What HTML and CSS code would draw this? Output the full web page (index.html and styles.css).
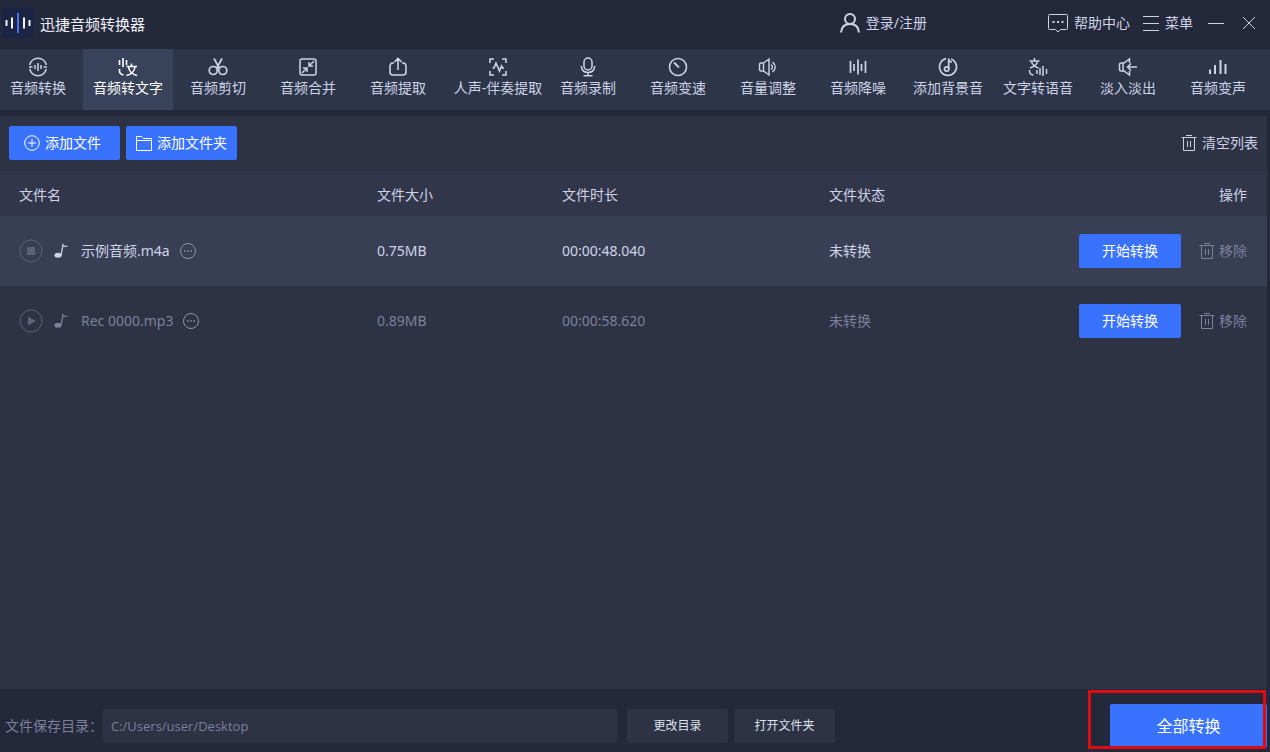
FILE: index.html
```html
<!DOCTYPE html>
<html lang="zh-CN">
<head>
<meta charset="utf-8">
<title>迅捷音频转换器</title>
<link rel="stylesheet" href="styles.css">
</head>
<body>
<svg class="sprite" aria-hidden="true">
  <symbol id="trash" viewBox="0 0 16 18"><path d="M0.500 3.500H15.500M5 1.500h6M2.500 3.500v13h11v-13M6.500 7v6M9.500 7v6"/></symbol>
  <symbol id="more" viewBox="0 0 18 18"><circle cx="9" cy="9" r="7.500"/><path d="M5 9h1.500M8.250 9h1.500M11.500 9H13" stroke-width="1.300"/></symbol>
  <symbol id="note" viewBox="0 0 14 16"><ellipse cx="4" cy="12.300" rx="3.600" ry="2.500" fill="currentColor" stroke="none"/><path d="M7 12.500L9 2Q10 4 13.500 3" stroke-width="1.300"/></symbol>
</svg>
<div class="app">
  <header class="titlebar">
    <svg class="logo" viewBox="0 0 32 32"><rect width="32" height="32" rx="5" fill="#1c2444" stroke="none"/><path d="M4.500 13v6M10 10.500v11M22 10.500v11M27.500 13v6" stroke="#f2f4ff" stroke-width="2"/><path d="M16 6v20" stroke="#4a70f0" stroke-width="2"/></svg>
    <h1 class="app-name">迅捷音频转换器</h1>
    <button class="plain login"><svg class="icon" viewBox="0 0 20 20"><g stroke-width="2"><circle cx="10" cy="6" r="5"/><path d="M1 19.500C1.500 13.500 5 11 10 11s8.500 2.500 9 8.500"/></g></svg>登录/注册</button>
    <button class="plain help"><svg class="icon" viewBox="0 0 20 20"><path d="M1.500 1.500h17q1 0 1 1v13q0 1-1 1h-6L10 19l-2.500-2.500h-6q-1 0-1-1v-13q0-1 1-1z"/><path d="M4.500 9h2M9 9h2M13.500 9h2" stroke-width="2"/></svg>帮助中心</button>
    <button class="plain menu"><svg class="icon-16" viewBox="0 0 16 16"><path d="M0 1.500h16M0 8.500h16M0 15.500h16"/></svg>菜单</button>
    <button class="plain window-btn" aria-label="最小化"><svg class="icon-16" viewBox="0 0 16 16"><path d="M0 8.500h16"/></svg></button>
    <button class="plain window-btn close" aria-label="关闭"><svg class="icon-14" viewBox="0 0 14 14"><path d="M1 1l12 12M13 1L1 13"/></svg></button>
  </header>

  <nav class="tabs">
    <button class="tab"><svg class="icon" viewBox="0 0 20 20"><g stroke-width="1.500"><path d="M1.700 8A8.500 8.500 0 0 1 18.300 8M18.300 12A8.500 8.500 0 0 1 1.700 12M1 10h3.500M15.500 10H19M7 8v4M10 6v8M13 8v4"/></g></svg>音频转换</button>
    <button class="tab active"><svg class="icon" viewBox="0 0 20 20"><g stroke-width="1.600"><path d="M1.500 3v5M5 1v9M8.500 3v5M1.500 12v2q0 3 4 4M13.500 6.500v3M8.500 9.500H19M10.500 10c.5 4 4 7.500 8.500 8.500M17 10c-.5 4-4 7.500-8.500 8.500"/></g></svg>音频转文字</button>
    <button class="tab"><svg class="icon" viewBox="0 0 20 20"><g stroke-width="1.700"><circle cx="5.200" cy="13.500" r="4"/><circle cx="14.800" cy="13.500" r="4"/><path d="M6 1.500l5.500 10M14 1.500L8.500 11.500"/></g></svg>音频剪切</button>
    <button class="tab"><svg class="icon" viewBox="0 0 20 20"><g stroke-width="1.500"><rect x="2" y="2" width="16" height="16" rx="2"/><path d="M16 4l-5 5M11 5v4h4M4 16l5-5M5 11h4v4"/></g></svg>音频合并</button>
    <button class="tab"><svg class="icon" viewBox="0 0 20 20"><g stroke-width="1.600"><path d="M6 6H4Q2 7 2 9v6q0 3 3 3h10q3 0 3-3V9q0-2-2-3h-2M10 13V2M6.500 5L10 1.500 13.500 5"/></g></svg>音频提取</button>
    <button class="tab wide"><svg class="icon" viewBox="0 0 20 20"><g stroke-width="1.600"><path d="M6 2H2v4M14 2h4v4M6 18H2v-4M14 18h4v-4M4.500 11H6l2-5 3.500 8 2-5 1 2h1.500"/></g></svg>人声-伴奏提取</button>
    <button class="tab"><svg class="icon" viewBox="0 0 20 20"><g stroke-width="1.500"><rect x="6" y="1" width="8" height="12" rx="4"/><path d="M3.500 9v1.500q1 5 6.500 5t6.500-5V9M10 15.500v3M5.500 18.700h9"/></g></svg>音频录制</button>
    <button class="tab"><svg class="icon" viewBox="0 0 20 20"><circle cx="10" cy="10" r="8.500" stroke-width="1.600"/><path d="M6 5.500l5 5" stroke-width="1.800"/></svg>音频变速</button>
    <button class="tab"><svg class="icon" viewBox="0 0 20 20"><g stroke-width="1.400"><path d="M5.500 6L11 2v16l-5.500-4H3Q1.500 14 1.500 12.500v-5Q1.500 6 3 6zM5.500 6v8M13 7.500q3 2.500 0 5M14.500 5q5.500 5 0 10"/></g></svg>音量调整</button>
    <button class="tab"><svg class="icon" viewBox="0 0 20 20"><path d="M2.500 4v12M6 7v7M10 2.500v15M13.500 7v7M17.500 4v12" stroke-width="1.700"/></svg>音频降噪</button>
    <button class="tab"><svg class="icon" viewBox="0 0 20 20"><g stroke-width="1.700"><path d="M8 1.700A8.500 8.500 0 1 0 13 2M10.700 12V1.500q0 3.500 3.300 3.500"/><circle cx="8.700" cy="12" r="2.200"/></g></svg>添加背景音</button>
    <button class="tab"><svg class="icon" viewBox="0 0 20 20"><g stroke-width="1.500"><path d="M6.500 1v2.500M1.500 4h10M3.500 5q1.500 4 7 6M9.500 5Q8 9 2 11M1.500 13v1q0 3.500 4 4M9 13v4M12 11v7M15 9v10M18.500 12v5"/></g></svg>文字转语音</button>
    <button class="tab"><svg class="icon" viewBox="0 0 20 20"><g stroke-width="1.500"><path d="M11.500 6V2L6 6H3Q1.500 6 1.500 7.500v5Q1.500 14 3 14h3l5.500 4v-4M5 6v8M9 10H19M13 6.500L9.500 10l3.500 3.500"/></g></svg>淡入淡出</button>
    <button class="tab"><svg class="icon" viewBox="0 0 20 20"><path d="M2 12.500V17M7 8v9M12.500 3v14M17.500 7v10" stroke-width="2"/></svg>音频变声</button>
  </nav>

  <main class="workspace">
    <div class="toolbar">
      <button class="primary add add-file"><svg class="icon-16" viewBox="0 0 16 16"><circle cx="8" cy="8" r="7.300"/><path d="M4 8h8M8 4v8"/></svg>添加文件</button>
      <button class="primary add"><svg class="icon-16" viewBox="0 0 16 16"><path d="M0.500 15.500V1.500h5l2 2h8v12zM0.500 5.500h15"/></svg>添加文件夹</button>
      <button class="plain clear"><svg class="trash"><use href="#trash"/></svg>清空列表</button>
    </div>
    <table class="files">
      <thead>
        <tr><th class="col-name">文件名</th><th class="col-size">文件大小</th><th class="col-time">文件时长</th><th class="col-state">文件状态</th><th class="col-action">操作</th></tr>
      </thead>
      <tbody>
        <tr class="selected">
          <td class="col-name"><div class="file">
            <button class="plain play" aria-label="停止"><svg class="icon-24" viewBox="0 0 24 24"><circle cx="12" cy="12" r="11"/><path d="M8 8h8v8H8z" fill="currentColor" stroke="none"/></svg></button>
            <svg class="note"><use href="#note"/></svg><span>示例音频.m4a</span>
            <button class="plain" aria-label="更多"><svg class="more"><use href="#more"/></svg></button></div></td>
          <td>0.75MB</td><td>00:00:48.040</td><td>未转换</td>
          <td><div class="actions"><button class="primary start">开始转换</button><button class="plain remove"><svg class="trash"><use href="#trash"/></svg>移除</button></div></td>
        </tr>
        <tr>
          <td class="col-name"><div class="file">
            <button class="plain play" aria-label="播放"><svg class="icon-24" viewBox="0 0 24 24"><circle cx="12" cy="12" r="11"/><path d="M9 7.500l8 4.500-8 4.500z" fill="currentColor" stroke="none"/></svg></button>
            <svg class="note"><use href="#note"/></svg><span>Rec 0000.mp3</span>
            <button class="plain" aria-label="更多"><svg class="more"><use href="#more"/></svg></button></div></td>
          <td>0.89MB</td><td>00:00:58.620</td><td>未转换</td>
          <td><div class="actions"><button class="primary start">开始转换</button><button class="plain remove"><svg class="trash"><use href="#trash"/></svg>移除</button></div></td>
        </tr>
      </tbody>
    </table>
  </main>

  <footer class="footer">
    <label for="dir">文件保存目录：</label>
    <input id="dir" class="path" type="text" value="C:/Users/user/Desktop">
    <button class="secondary">更改目录</button>
    <button class="secondary">打开文件夹</button>
    <div class="convert">
      <button class="primary convert-all">全部转换</button>
      <div class="highlight"></div>
    </div>
  </footer>
</div>
</body>
</html>
```

FILE: styles.css
```css
* {
  box-sizing: border-box;
}

body {
  margin: 0;
  background: #24283b;
  color: #cfd3e8;
  font: 14px/20px "Noto Sans", "Noto Sans CJK SC", sans-serif;
}

button,
input {
  font: inherit;
  color: inherit;
}

button {
  display: flex;
  align-items: center;
  justify-content: center;
  padding: 0;
  border: 0;
  border-radius: 2px;
  white-space: nowrap;
  cursor: pointer;
}

svg {
  flex: none;
  fill: none;
  stroke: currentColor;
}

.sprite {
  position: absolute;
  width: 0;
  height: 0;
}

.icon { width: 20px; height: 20px; }
.icon-14 { width: 14px; height: 14px; }
.icon-16 { width: 16px; height: 16px; }
.icon-24 { width: 24px; height: 24px; }
.trash { width: 16px; height: 18px; }
.more { width: 18px; height: 18px; }
.note { width: 14px; height: 16px; }

.app {
  display: flex;
  flex-direction: column;
  min-height: 100vh;
}

.plain {
  background: none;
}

.primary {
  background: #3872ff;
  color: #fff;
}

.titlebar {
  display: flex;
  align-items: center;
  height: 49px;
  padding: 0 14px 4px 2px;
}

.logo {
  width: 32px;
  height: 32px;
}

.app-name {
  margin: 2px auto 0 6px;
  color: #f0f2fa;
  font-size: 15px;
  font-weight: 400;
}

.login {
  gap: 6px;
  margin-right: 121px;
}

.help {
  gap: 6px;
  margin-right: 13px;
}

.menu {
  gap: 6px;
  margin-right: 15px;
}

.close {
  margin-left: 18px;
}

.tabs {
  display: flex;
  height: 61px;
  margin-bottom: 6px;
  padding-right: 7px;
  background: #2d3549;
}

.tab {
  flex: 1;
  flex-direction: column;
  justify-content: flex-start;
  gap: 1px;
  min-width: 0;
  padding-top: 8px;
  border-radius: 0;
  background: none;
}

.tab:first-child {
  margin-left: -7px;
}

.tab.wide {
  margin-left: 10px;
}

.tab.active {
  background: #38425a;
  color: #fff;
}

.workspace {
  flex: 1;
  margin-right: 3px;
  background: #2d3244;
}

.toolbar {
  display: flex;
  align-items: center;
  gap: 6px;
  height: 55px;
  padding: 0 9px 2px;
}

.add {
  gap: 5px;
  width: 111px;
  height: 34px;
}

.add-file {
  padding-right: 4px;
}

.clear {
  gap: 5px;
  margin-left: auto;
}

.files {
  width: 100%;
  table-layout: fixed;
  border-collapse: collapse;
  text-align: left;
}

.files th,
.files td {
  padding: 0;
  font-weight: 400;
}

.files th {
  height: 45px;
  padding-top: 2px;
  background: #31364a;
}

.files td {
  height: 70px;
  color: #7c819c;
}

.files .selected {
  background: #383f54;
}

.files .selected td {
  color: #cfd3e8;
}

.files .col-name {
  width: 377px;
  padding-left: 19px;
}

.files .col-size { width: 185px; }
.files .col-time { width: 267px; }

.files .col-action {
  padding-right: 20px;
  text-align: right;
}

.file {
  display: flex;
  align-items: center;
}

.play {
  margin-right: 11px;
  color: #5c627a;
}

.file span {
  margin: 0 9px 0 13px;
}

.more {
  color: #8f94ae;
}

.actions {
  display: flex;
  justify-content: flex-end;
  gap: 18px;
  padding-right: 20px;
}

.start {
  width: 102px;
  height: 34px;
}

.files .remove {
  gap: 4px;
  color: #7c819c;
}

.footer {
  display: flex;
  align-items: center;
  height: 63px;
  padding: 11px 3px 0 5px;
  color: #7c819c;
}

.path {
  flex: 1;
  min-width: 0;
  height: 34px;
  margin-right: 10px;
  padding: 0 8px;
  border: 0;
  border-radius: 2px;
  background: #2d3244;
  font-family: "Open Sans", "Noto Sans CJK SC", sans-serif;
  font-size: 13px;
}

.secondary {
  width: 101px;
  height: 34px;
  margin-right: 6px;
  background: #2d3244;
  color: #dde0ee;
  font-size: 12px;
}

.convert {
  position: relative;
  margin-left: 269px;
}

.convert-all {
  width: 157px;
  height: 44px;
  font-size: 16px;
}

.highlight {
  position: absolute;
  inset: -14px 1px -1px -22px;
  border: 3px solid #dd0c12;
  pointer-events: none;
}
```
